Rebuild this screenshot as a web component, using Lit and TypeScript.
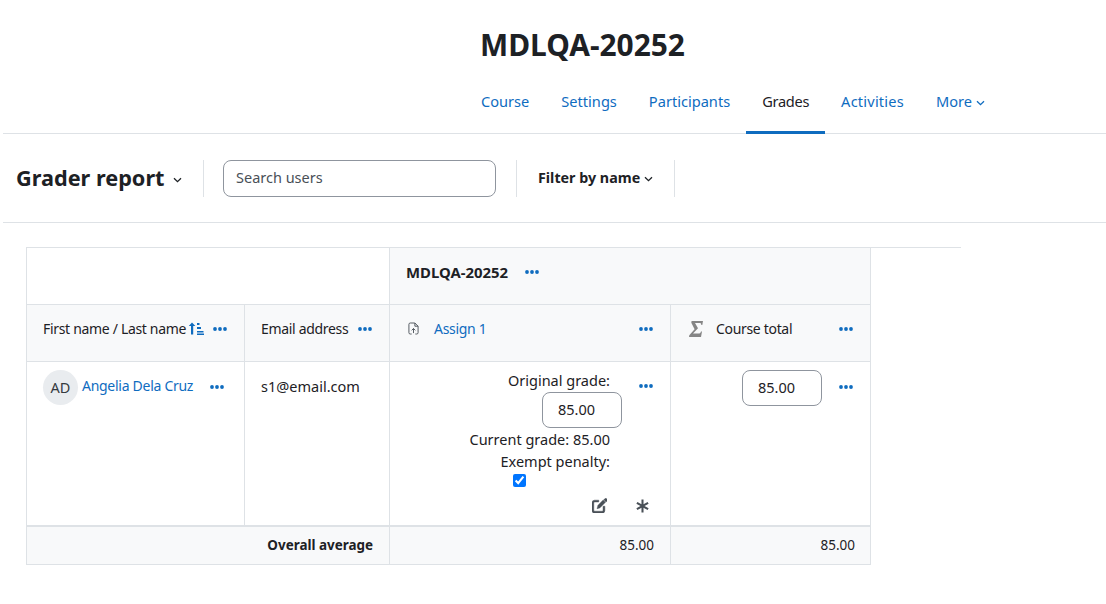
import { LitElement, html, css } from "lit";
import { customElement } from "lit/decorators.js";

const dots = html`<svg class="dots" viewBox="0 0 14 4" width="14" height="4"><circle cx="2" cy="2" r="1.9"/><circle cx="7" cy="2" r="1.9"/><circle cx="12" cy="2" r="1.9"/></svg>`;
const chev = html`<svg class="chev" viewBox="0 0 9 6" width="9" height="6"><path d="M1 1.200 4.500 4.700 8 1.200" fill="none" stroke="currentColor" stroke-width="1.300"/></svg>`;

@customElement("app-root")
export class AppRoot extends LitElement {
  static styles = css`
    :host { display: block; width: 1106px; height: 604px; overflow: hidden; background: #fff; color: #1d2125;
      font-family: "Noto Sans", sans-serif; font-size: 14.5px; }
    * { box-sizing: border-box; }
    a { color: #0f6cbf; text-decoration: none; }
    .chev { flex: none; display: block; }
    .title { margin: 0; height: 81px; padding: 24px 0 0 480px; font-size: 29.9px; line-height: 41px; font-weight: 700; white-space: nowrap; }
    .nav { display: flex; height: 53px; margin-left: 3px; padding-left: 462px; border-bottom: 1px solid #dee2e6; font-size: 14.6px; }
    .tab { display: flex; align-items: center; gap: 4px; height: 53px; padding: 0 16px 13px; color: #0f6cbf; white-space: nowrap; }
    .tab .chev { margin-top: 4px; }
    .tab.on { color: #1d2125; border-bottom: 3px solid #0f6cbf; padding-bottom: 10px; letter-spacing: -0.3px; }
    .tab.wide { letter-spacing: 0.2px; }
    .tbar { display: flex; align-items: center; height: 89px; margin-left: 3px; padding-left: 13px; border-bottom: 1px solid #dee2e6; }
    .rep { font-size: 21.7px; font-weight: 700; white-space: nowrap; width: 157px; padding-bottom: 2px; flex: none; }
    .tbar > .chev { margin-right: 21px; margin-top: 3px; color: #1d2125; }
    .sep { width: 1px; height: 37px; background: #dee2e6; flex: none; }
    .search { width: 273px; height: 37px; margin: 0 20px 0 19px; padding: 0 0 2px 12px; display: flex; align-items: center;
      border: 1px solid #8f959e; border-radius: 8px; color: #495057; flex: none; }
    .filter { display: flex; align-items: center; gap: 4px; padding: 0 21px 2px 21px; font-weight: 700; font-size: 14.3px; white-space: nowrap; flex: none; width: 157px; }
    .filter .chev { margin-top: 4px; }
    .wrap { margin: 24px 0 0 26px; width: 935px; border-top: 1px solid #dee2e6; }
    .grid { display: grid; width: 845px; grid-template-columns: 218px 145px 281px 200px; grid-template-rows: 57px 57px 164px 39px;
      border-right: 1px solid #dee2e6; }
    .c { border-left: 1px solid #dee2e6; border-bottom: 1px solid #dee2e6; padding: 0 17px 0 16px; display: flex; min-width: 0; }
    .shade { background: #f8f9fa; }
    .top1 { grid-column: 1 / 3; }
    .top2 { grid-column: 3 / 5; align-items: center; padding-bottom: 8px; font-weight: 700; font-size: 14.9px; gap: 17px; }
    .h { align-items: center; justify-content: space-between; padding-bottom: 8px; white-space: nowrap; font-size: 14px; letter-spacing: -0.32px; }
    .h .lbl, .h .txt { margin-bottom: 1px; }
    .hh .lbl, .hh .txt { margin-bottom: 2px; }
    .sort { margin-left: 2px; color: #0f6cbf; flex: none; }
    .dots { fill: #0f6cbf; flex: none; display: block; }
    .lbl { display: flex; align-items: center; }
    .assign { gap: 15px; }
    .assign > svg { flex: none; margin-left: 2px; }
    .sigma { margin-left: 1px; }
    .sum { gap: 13px; }
    .body-name { padding-top: 8px; align-items: flex-start; }
    .avatar { width: 35px; height: 35px; border-radius: 50%; background: #e9ecef; display: flex; align-items: center; justify-content: center;
      margin-right: 4px; flex: none; color: #343a40; padding-bottom: 1px; }
    .name { margin-top: 6px; white-space: nowrap; font-size: 14px; letter-spacing: -0.28px; }
    .body-name .dots { margin: 15px 0 0 17px; }
    .email { padding-top: 14px; white-space: nowrap; }
    .gcell { flex-direction: column; }
    .gtop { display: flex; justify-content: flex-end; gap: 29px; }
    .gtop .dots { margin-top: 22px; }
    .stack { display: flex; flex-direction: column; align-items: flex-end; padding-top: 8px; line-height: 21px; white-space: nowrap; }
    .inp { width: 80px; height: 36px; border: 1px solid #8f959e; border-radius: 8px; display: flex; align-items: center; padding: 0 0 1px 15px; flex: none; }
    .stack .inp { margin: 1px -12px 1px 0; }
    .stack .ex { margin-top: 1px; }
    .chk { display: block; width: 13px; height: 13px; margin: 2px 84px 0 0; }
    .acts { display: flex; justify-content: flex-end; align-items: center; gap: 29px; margin-top: 11px; padding-right: 4px; }
    .acts svg { fill: #495057; display: block; }
    .edit { stroke: #495057; stroke-width: 0.5; }
    .tcell { justify-content: flex-end; gap: 17px; padding-top: 8px; align-items: flex-start; }
    .tcell .inp { padding-bottom: 2px; }
    .tcell .dots { margin-top: 15px; }
    .foot { border-top: 1px solid #dee2e6; align-items: center; justify-content: flex-end; padding-right: 16px; padding-bottom: 2px; }
    .bold { grid-column: 1 / 3; font-weight: 700; font-size: 13.45px; }
    .foot.num { font-size: 13.5px; }
    .foot.last { padding-right: 15px; }
  `;

  render() {
    return html`
      <h1 class="title">MDLQA-20252</h1>
      <nav class="nav">
        <a class="tab">Course</a><a class="tab">Settings</a><a class="tab">Participants</a>
        <a class="tab on">Grades</a><a class="tab wide">Activities</a><a class="tab">More ${chev}</a>
      </nav>
      <div class="tbar">
        <div class="rep">Grader report</div>${chev}<div class="sep"></div>
        <div class="search">Search users</div><div class="sep"></div>
        <div class="filter">Filter by name ${chev}</div><div class="sep"></div>
      </div>
      <div class="wrap"><div class="grid">
        <div class="c top1"></div>
        <div class="c top2 shade">MDLQA-20252 ${dots}</div>
        <div class="c h hh shade"><span class="lbl">First name / Last name<svg class="sort" viewBox="0 0 16 13" width="16" height="13" fill="currentColor">
          <path d="M4 .5 7.400 4H5.200v8.500H3V4H.8z"/><path d="M9 1h2.500v2H9zM9 5h4v2H9zM9 9h6.500v1.600H9zM9 11.400h7V13H9z"/></svg></span>${dots}</div>
        <div class="c h hh shade"><span class="txt">Email address</span> ${dots}</div>
        <div class="c h shade"><span class="lbl assign"><svg viewBox="0 0 12 14" width="11" height="13" fill="none" stroke="#495057" stroke-width="1">
          <path d="M7.500 1H2.500A1.500 1.500 0 0 0 1 2.500v9A1.500 1.500 0 0 0 2.500 13H4M8 13h1.500a1.500 1.500 0 0 0 1.500-1.500V4.500L7.500 1v3.500H11"/><path d="M6 12V7M4 9l2-2 2 2"/></svg><a>Assign 1</a></span>${dots}</div>
        <div class="c h shade"><span class="lbl assign sum"><svg class="sigma" viewBox="0 0 14 16" width="14" height="16" fill="#858585">
          <path d="M2.600 0H14l-.7 4h-1c0-1.400-.4-2-2-2H6l3 5.300L4 12.600h5.500c1.500 0 2-.6 2.500-2h1l-1 5.400H0l.3-1.700L5.600 8.200 2.300 1.700z"/></svg>Course total</span>${dots}</div>

        <div class="c body-name"><div class="avatar">AD</div><a class="name">Angelia Dela Cruz</a>${dots}</div>
        <div class="c email">s1@email.com</div>
        <div class="c gcell">
          <div class="gtop">
            <div class="stack">
              <span>Original grade:</span>
              <div class="inp">85.00</div>
              <span>Current grade: 85.00</span>
              <span class="ex">Exempt penalty:</span>
              <input class="chk" type="checkbox" checked />
            </div>
            ${dots}
          </div>
          <div class="acts">
            <svg class="edit" viewBox="0 0 16 16" width="15" height="15"><path d="M13.600.9a1.500 1.500 0 0 1 2.100 0l.3.3a1.500 1.500 0 0 1 0 2.100l-1 1-2.400-2.400zM6.200 7.900l5.700-5.700 2.400 2.400-5.700 5.700c-.2.2-.4.3-.6.4l-2.600.7.7-2.600c0-.2.2-.4.100-.5zM2.800 2.300h4.400v1.900H2.800a.9.9 0 0 0-.9.9v8.100c0 .5.4.9.9.9h8.100c.5 0 .9-.4.9-.9V8.800h1.900v4.400A2.800 2.800 0 0 1 10.900 16H2.800A2.800 2.800 0 0 1 0 13.200V5.100a2.800 2.800 0 0 1 2.800-2.800z"/></svg>
            <svg viewBox="0 0 14 16" width="13" height="15"><path d="M5.900 1.500h2.200v5.100l4.400-2.500 1.100 1.900L9.200 8.500l4.400 2.500-1.100 1.900-4.400-2.500v5.100H5.900v-5.100l-4.400 2.500L.4 11l4.400-2.500L.4 6l1.100-1.900 4.400 2.500z"/></svg>
          </div>
        </div>
        <div class="c tcell"><div class="inp">85.00</div>${dots}</div>

        <div class="c foot bold shade">Overall average</div>
        <div class="c foot num shade">85.00</div>
        <div class="c foot num last shade">85.00</div>
      </div></div>
    `;
  }
}
